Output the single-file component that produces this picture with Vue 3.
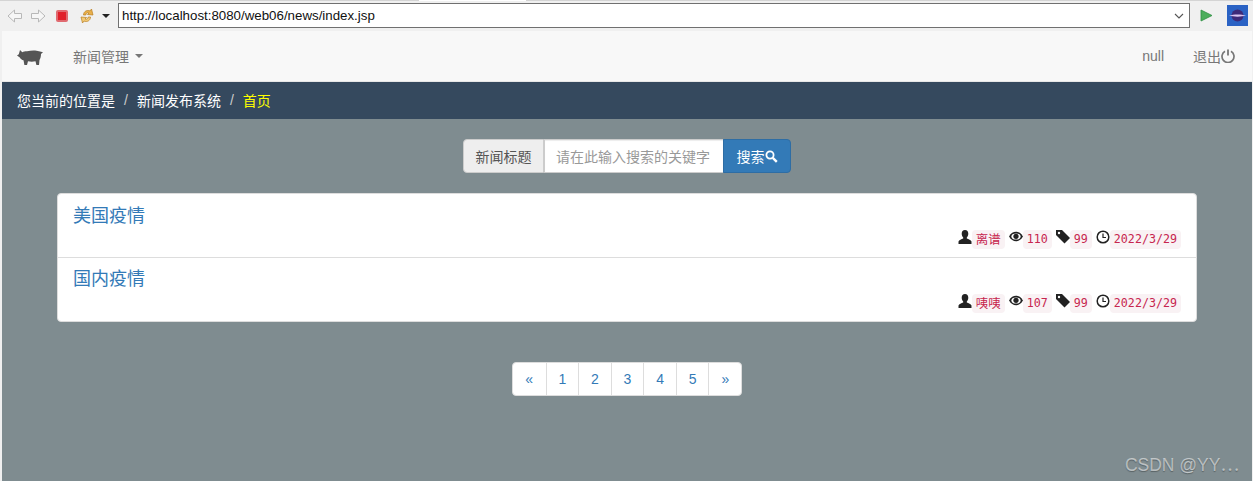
<script setup>
const news = [
  { title: '美国疫情', author: '离谱', views: 110, tags: 99, date: '2022/3/29' },
  { title: '国内疫情', author: '咦咦', views: 107, tags: 99, date: '2022/3/29' }
]
const pages = ['«', '1', '2', '3', '4', '5', '»']
</script>

<template>
  <div class="app">
    <div class="toolbar">
      <span class="tab"></span>
      <svg class="tool-icon back" width="15" height="14" viewBox="0 0 15 14">
        <path d="M7.500 1 1 7l6.500 6V9.500h7v-5h-7z" fill="#f6f6f6" stroke="#b8b8b8" />
      </svg>
      <svg class="tool-icon fwd" width="15" height="14" viewBox="0 0 15 14">
        <path d="M7.500 1 14 7l-6.500 6V9.500h-7v-5h7z" fill="#f6f6f6" stroke="#b8b8b8" />
      </svg>
      <span class="stop"><span></span></span>
      <svg class="tool-icon sync" width="16" height="16" viewBox="0 0 16 16">
        <path d="M4.500 7C4.500 3.500 8 1.500 11 3L12.500 1l1.500 6-5.500-.5L10 5C8.500 4.300 7 5 6.800 7z" fill="#e9b04a" stroke="#b97c1e" stroke-width=".7" />
        <path d="M11.500 9C11.500 12.500 8 14.500 5 13L3.500 15 2 9l5.500.5L6 11C7.500 11.700 9 11 9.200 9z" fill="#f2ca76" stroke="#b97c1e" stroke-width=".7" />
      </svg>
      <span class="caret-black"></span>
      <div class="url">
        <span>http://localhost:8080/web06/news/index.jsp</span>
        <svg width="10" height="6" viewBox="0 0 10 6"><path d="M1 1l4 4 4-4" fill="none" stroke="#555" stroke-width="1.100" /></svg>
      </div>
      <svg class="go" width="13" height="13" viewBox="0 0 13 13"><path d="M1 1l11 5.500L1 12z" fill="#4cae5c" stroke="#2f8f44" stroke-width=".8" /></svg>
      <svg class="globe" width="21" height="21" viewBox="0 0 21 21">
        <rect width="21" height="21" fill="#2a62c4" />
        <circle cx="10.500" cy="10.500" r="6" fill="#3d2a78" />
        <path d="M2 10.500c5-1.500 12-1.500 17 0-5 1.500-12 1.500-17 0z" fill="#d8c4f0" />
      </svg>
    </div>

    <div class="page">
      <nav class="navbar">
        <svg class="logo" width="26" height="17" viewBox="0 0 26 17">
          <path d="M0 6.500l1.800-1.300L3 1l2.300 2.300C6.500 2.700 8 2.300 10 2.300 14 1.300 19 1.200 22 2.300L26 3.300 24 5c0 2.500-.6 4.500-1.500 6L22 16h-2.600l-.9-3.800c-2.500.6-5 .6-7.500 0L10 16H7.400l-.9-4.700C5 11 3.500 9.800 2.800 8.500z" fill="#555" />
        </svg>
        <span class="menu">新闻管理<i class="caret"></i></span>
        <span class="spacer"></span>
        <span class="nav-link null">null</span>
        <span class="nav-link logout">退出<svg width="14" height="14" viewBox="0 0 14 14"><path d="M4 2.300a6 6 0 1 0 6 0" fill="none" stroke="#777" stroke-width="1.700" /><path d="M7 .5v6" stroke="#777" stroke-width="1.800" /></svg></span>
      </nav>

      <div class="crumb">
        <span>您当前的位置是</span><i>/</i><span>新闻发布系统</span><i>/</i><span class="active">首页</span>
      </div>

      <main class="content">
        <div class="search">
          <span class="addon">新闻标题</span>
          <span class="field">请在此输入搜索的关键字</span>
          <button class="btn">搜索<svg width="13" height="13" viewBox="0 0 13 13"><circle cx="5" cy="5" r="3.600" fill="none" stroke="#fff" stroke-width="1.800" /><path d="M7.800 7.800l4 4" stroke="#fff" stroke-width="2.400" /></svg></button>
        </div>

        <ul class="list">
          <li v-for="item in news" :key="item.title" class="item">
            <a class="title">{{ item.title }}</a>
            <div class="meta">
              <svg class="gl" width="14" height="14" viewBox="0 0 14 14"><path d="M7 0c2.200 0 3.300 1.600 3.300 3.800 0 1.500-.6 2.800-1.500 3.600v1.200c1.700.7 4.200 1.500 4.700 2.900V14H.5v-2.500c.5-1.400 3-2.200 4.700-2.900V7.400C4.300 6.600 3.700 5.300 3.700 3.800 3.700 1.600 4.800 0 7 0z" fill="#222" /></svg>
              <code class="name">{{ item.author }}</code>
              <svg class="gl" width="14" height="14" viewBox="0 0 14 14"><path d="M0 6.500C2 3.200 4.300 1.800 7 1.800s5 1.400 7 4.700c-2 3.300-4.300 4.700-7 4.700s-5-1.400-7-4.700z" fill="#222" /><ellipse cx="7" cy="6.500" rx="4.600" ry="3.100" fill="#fff" /><circle cx="7" cy="6.300" r="2.600" fill="#222" /></svg>
              <code>{{ item.views }}</code>
              <svg class="gl" width="14" height="14" viewBox="0 0 14 14"><path d="M0 0h6l8 8-5.500 5.500L0 5z" fill="#222" /><circle cx="3" cy="3" r="1.200" fill="#fff" /></svg>
              <code>{{ item.tags }}</code>
              <svg class="gl" width="14" height="14" viewBox="0 0 14 14"><circle cx="7" cy="7" r="5.800" fill="none" stroke="#222" stroke-width="1.500" /><path d="M7 3.500V7.500h3" fill="none" stroke="#222" stroke-width="1.200" /></svg>
              <code>{{ item.date }}</code>
            </div>
          </li>
        </ul>

        <div class="pager">
          <a v-for="p in pages" :key="p">{{ p }}</a>
        </div>
      </main>
      <span class="watermark">CSDN @YY⋯</span>
    </div>
  </div>
</template>

<style>
html, body { margin: 0; height: 100%; overflow: hidden; }
</style>

<style scoped>
.app {
  width: 1253px;
  height: 481px;
  display: flex;
  flex-direction: column;
  background: #f0f0f0;
  font-family: "Liberation Sans", "Noto Sans CJK SC", sans-serif;
  font-size: 14px;
  overflow: hidden;
}
.toolbar {
  position: relative;
  height: 31px;
  flex: none;
  display: flex;
  align-items: center;
  box-sizing: border-box;
  padding: 0 5px 0 7px;
  box-shadow: inset 0 1px 0 #d4d4d4;
}
.tab {
  position: absolute;
  top: 0;
  left: 419px;
  width: 107px;
  height: 1px;
  background: #fff;
}
.tool-icon { flex: none; }
.fwd { margin-left: 9px; }
.stop {
  margin-left: 10px;
  width: 12px;
  height: 12px;
  border-radius: 2px;
  background: #e06a70;
  display: flex;
  align-items: center;
  justify-content: center;
}
.stop span { width: 8px; height: 8px; background: #e0202a; }
.sync { margin-left: 11px; }
.caret-black {
  margin-left: 7px;
  border-top: 4px solid #222;
  border-left: 4px solid transparent;
  border-right: 4px solid transparent;
}
.url {
  margin-left: 8px;
  width: 1072px;
  height: 25px;
  box-sizing: border-box;
  background: #fff;
  border: 1px solid #707070;
  display: flex;
  align-items: center;
  justify-content: space-between;
  padding: 0 5px 0 3px;
  font-family: "Liberation Sans", sans-serif;
  font-size: 13.300px;
  color: #111;
}
.go { margin-left: 10px; }
.globe { margin-left: 14px; }

.page {
  position: relative;
  flex: 1;
  margin: 0 1px 0 2px;
  display: flex;
  flex-direction: column;
  background: #7f8c90;
}
.navbar {
  height: 50px;
  flex: none;
  display: flex;
  align-items: center;
  padding: 0 17px 0 15px;
  background: #f8f8f8;
  border-bottom: 1px solid #e7e7e7;
  color: #777;
}
.logo { flex: none; margin-top: 2px; }
.menu { margin-left: 30px; display: flex; align-items: center; }
.caret {
  margin-left: 6px;
  border-top: 4px solid #777;
  border-left: 4px solid transparent;
  border-right: 4px solid transparent;
}
.spacer { flex: 1; }
.null { margin-right: 29px; }
.logout { display: flex; align-items: center; }

.crumb {
  height: 37px;
  flex: none;
  box-sizing: border-box;
  display: flex;
  align-items: center;
  padding: 0 0 1px 15px;
  background: #35495e;
  color: #fff;
}
.crumb i { font-style: normal; color: #ccc; padding: 0 9px; }
.crumb .active { color: #ff0; }

.content {
  display: flex;
  flex-direction: column;
  align-items: center;
  padding-top: 20px;
}
.search { display: flex; height: 34px; }
.addon {
  box-sizing: border-box;
  width: 81px;
  display: flex;
  align-items: center;
  justify-content: center;
  color: #555;
  background: #eee;
  border: 1px solid #ccc;
  border-radius: 4px 0 0 4px;
}
.field {
  box-sizing: border-box;
  width: 179px;
  display: flex;
  align-items: center;
  padding-left: 11px;
  background: #fff;
  color: #999;
  border: 1px solid #ccc;
  border-right: 0;
  box-shadow: inset 0 1px 1px rgba(0, 0, 0, 0.075);
}
.btn {
  box-sizing: border-box;
  width: 68px;
  padding: 0;
  display: flex;
  align-items: center;
  justify-content: center;
  color: #fff;
  background: #337ab7;
  border: 1px solid #2e6da4;
  border-radius: 0 4px 4px 0;
  font: inherit;
}

.list {
  list-style: none;
  margin: 20px 0 0;
  padding: 0;
  width: 1140px;
  background: #fff;
  border: 1px solid #ddd;
  border-radius: 4px;
  box-sizing: border-box;
}
.item {
  height: 63px;
  box-sizing: border-box;
  padding: 10px 15px 0;
  display: flex;
  flex-direction: column;
}
.item + .item { height: 64px; border-top: 1px solid #ddd; padding-top: 9px; }
.title { font-size: 18px; line-height: 24px; color: #337ab7; }
.meta {
  margin-top: 2px;
  display: flex;
  justify-content: flex-end;
  align-items: flex-start;
}
.item + .item .meta { margin-top: 3px; }
.gl { margin-left: 4px; flex: none; }
code {
  font-family: "DejaVu Sans Mono", "Noto Sans CJK SC", monospace;
  font-size: 11.660px;
  line-height: 19px;
  height: 19px;
  padding: 0 4px;
  color: #c7254e;
  background: #f9f2f4;
  border-radius: 4px;
}
code.name { font-size: 12.500px; }

.pager {
  margin-top: 40px;
  display: flex;
  height: 34px;
  box-sizing: border-box;
  background: #fff;
  border: 1px solid #ddd;
  border-radius: 4px;
}
.pager a {
  box-sizing: border-box;
  width: 32.600px;
  display: flex;
  align-items: center;
  justify-content: center;
  color: #337ab7;
}
.pager a + a { border-left: 1px solid #ddd; }

.watermark {
  position: absolute;
  right: 13px;
  bottom: 5px;
  font-size: 17.500px;
  color: rgba(255, 255, 255, 0.55);
  text-shadow: 0 1px 1px rgba(0, 0, 0, 0.3);
}
</style>
